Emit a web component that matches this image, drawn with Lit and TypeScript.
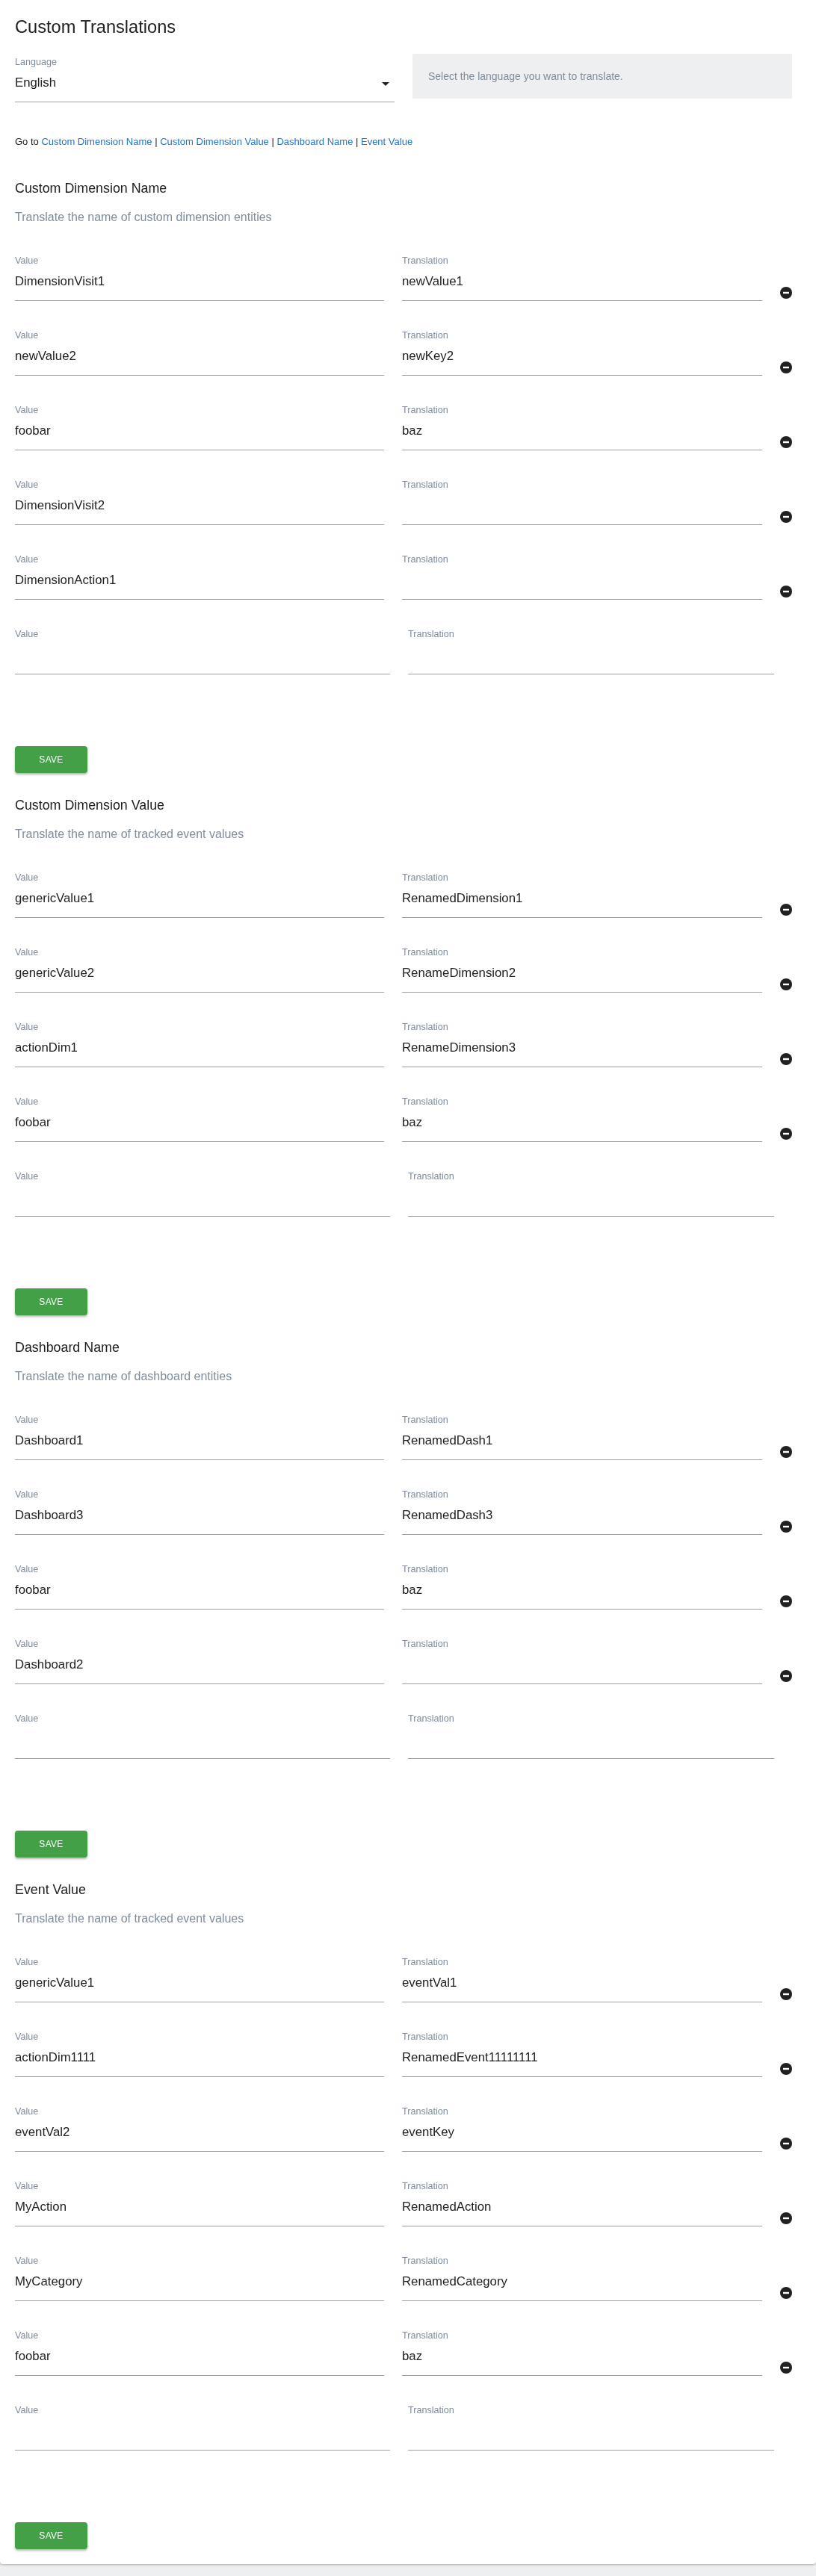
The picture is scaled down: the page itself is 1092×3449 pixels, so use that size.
import { html, css, LitElement } from "lit";
import { customElement } from "lit/decorators.js";

type Row = [string, string];

const SECTIONS: { title: string; sub: string; rows: Row[] }[] = [
  {
    title: "Custom Dimension Name",
    sub: "Translate the name of custom dimension entities",
    rows: [
      ["DimensionVisit1", "newValue1"],
      ["newValue2", "newKey2"],
      ["foobar", "baz"],
      ["DimensionVisit2", ""],
      ["DimensionAction1", ""],
    ],
  },
  {
    title: "Custom Dimension Value",
    sub: "Translate the name of tracked event values",
    rows: [
      ["genericValue1", "RenamedDimension1"],
      ["genericValue2", "RenameDimension2"],
      ["actionDim1", "RenameDimension3"],
      ["foobar", "baz"],
    ],
  },
  {
    title: "Dashboard Name",
    sub: "Translate the name of dashboard entities",
    rows: [
      ["Dashboard1", "RenamedDash1"],
      ["Dashboard3", "RenamedDash3"],
      ["foobar", "baz"],
      ["Dashboard2", ""],
    ],
  },
  {
    title: "Event Value",
    sub: "Translate the name of tracked event values",
    rows: [
      ["genericValue1", "eventVal1"],
      ["actionDim1111", "RenamedEvent11111111"],
      ["eventVal2", "eventKey"],
      ["MyAction", "RenamedAction"],
      ["MyCategory", "RenamedCategory"],
      ["foobar", "baz"],
    ],
  },
];

@customElement("app-root")
export class AppRoot extends LitElement {
  static styles = css`
    :host {
      display: block;
      background: #eeeff1;
      height: 3449px;
      font-family: "Liberation Sans", Arial, sans-serif;
      color: #212121;
    }
    .card {
      background: #fff;
      height: 3433px;
      border-radius: 0 0 4px 4px;
      box-shadow: 0 1px 3px rgba(0, 0, 0, 0.3);
      overflow: hidden;
    }
    .content {
      padding: 0 20px;
      will-change: transform;
    }
    h1 {
      margin: 0;
      padding-top: 22px;
      font-size: 23.6px;
      line-height: 28px;
      font-weight: 400;
    }
    .top {
      display: flex;
      gap: 24px;
      margin-top: 22px;
    }
    .top .field {
      width: 508px;
    }
    .hint {
      width: 508px;
      height: 60px;
      box-sizing: border-box;
      padding-left: 21px;
      display: flex;
      align-items: center;
      background: #eeeff1;
      border-radius: 2px;
      color: #7f8c9b;
      font-size: 14px;
    }
    .field {
      position: relative;
      height: 65px;
      box-sizing: border-box;
      border-bottom: 1px solid #9e9e9e;
    }
    .label {
      font-size: 12.6px;
      line-height: 14px;
      color: #7f8c9b;
      padding-top: 4px;
    }
    .text {
      font-size: 16.8px;
      line-height: 20px;
      height: 20px;
      margin-top: 11px;
    }
    .arrow {
      position: absolute;
      right: 7px;
      top: 38px;
      width: 0;
      height: 0;
      border-left: 5px solid transparent;
      border-right: 5px solid transparent;
      border-top: 5px solid #212121;
    }
    .goto {
      margin-top: 43px;
      font-size: 13px;
      line-height: 20px;
    }
    .goto a {
      color: #1976d2;
      text-decoration: none;
    }
    h2 {
      margin: 0;
      font-size: 17.85px;
      line-height: 24px;
      font-weight: 400;
    }
    .sub {
      margin-top: 15px;
      font-size: 16px;
      line-height: 24px;
      color: #7f8c9b;
    }
    .rows {
      display: flex;
      flex-direction: column;
      gap: 35px;
      margin-top: 35px;
    }
    .row {
      display: flex;
      gap: 24px;
      align-items: flex-start;
    }
    .row .v {
      width: 494px;
    }
    .row .t {
      width: 482px;
    }
    .row.empty .v {
      width: 502px;
    }
    .row.empty .t {
      width: 490px;
    }
    .row svg {
      width: 16px;
      height: 16px;
      margin-top: 46px;
      display: block;
    }
    button {
      display: block;
      width: 97px;
      height: 36px;
      margin-top: 96px;
      border: 0;
      border-radius: 4px;
      background: #43a047;
      color: #fff;
      font-family: inherit;
      font-size: 12px;
      letter-spacing: 0.3px;
      box-shadow: 0 2px 3px rgba(0, 0, 0, 0.3);
    }
    .sec {
      padding-top: 31px;
    }
    .sec.first {
      padding-top: 40px;
    }
  `;

  private field(label: string, value: string, cls: string) {
    return html`<div class="field ${cls}">
      <div class="label">${label}</div>
      <div class="text">${value}</div>
    </div>`;
  }

  render() {
    return html`<div class="card">
      <div class="content">
        <h1>Custom Translations</h1>
        <div class="top">
          <div class="field">
            <div class="label">Language</div>
            <div class="text">English</div>
            <div class="arrow"></div>
          </div>
          <div class="hint">Select the language you want to translate.</div>
        </div>
        <div class="goto">
          Go to <a href="#a">Custom Dimension Name</a> |
          <a href="#b">Custom Dimension Value</a> |
          <a href="#c">Dashboard Name</a> | <a href="#d">Event Value</a>
        </div>
        ${SECTIONS.map(
          (s, i) => html`<section class="sec ${i === 0 ? "first" : ""}">
            <h2>${s.title}</h2>
            <div class="sub">${s.sub}</div>
            <div class="rows">
              ${s.rows.map(
                (r) => html`<div class="row">
                  ${this.field("Value", r[0], "v")}
                  ${this.field("Translation", r[1], "t")}
                  <svg viewBox="0 0 16 16">
                    <circle cx="8" cy="8" r="8" fill="#212121"></circle>
                    <rect x="4" y="6.8" width="8" height="2.4" fill="#fff"></rect>
                  </svg>
                </div>`,
              )}
              <div class="row empty">
                ${this.field("Value", "", "v")} ${this.field("Translation", "", "t")}
              </div>
            </div>
            <button>SAVE</button>
          </section>`,
        )}
      </div>
    </div>`;
  }
}
